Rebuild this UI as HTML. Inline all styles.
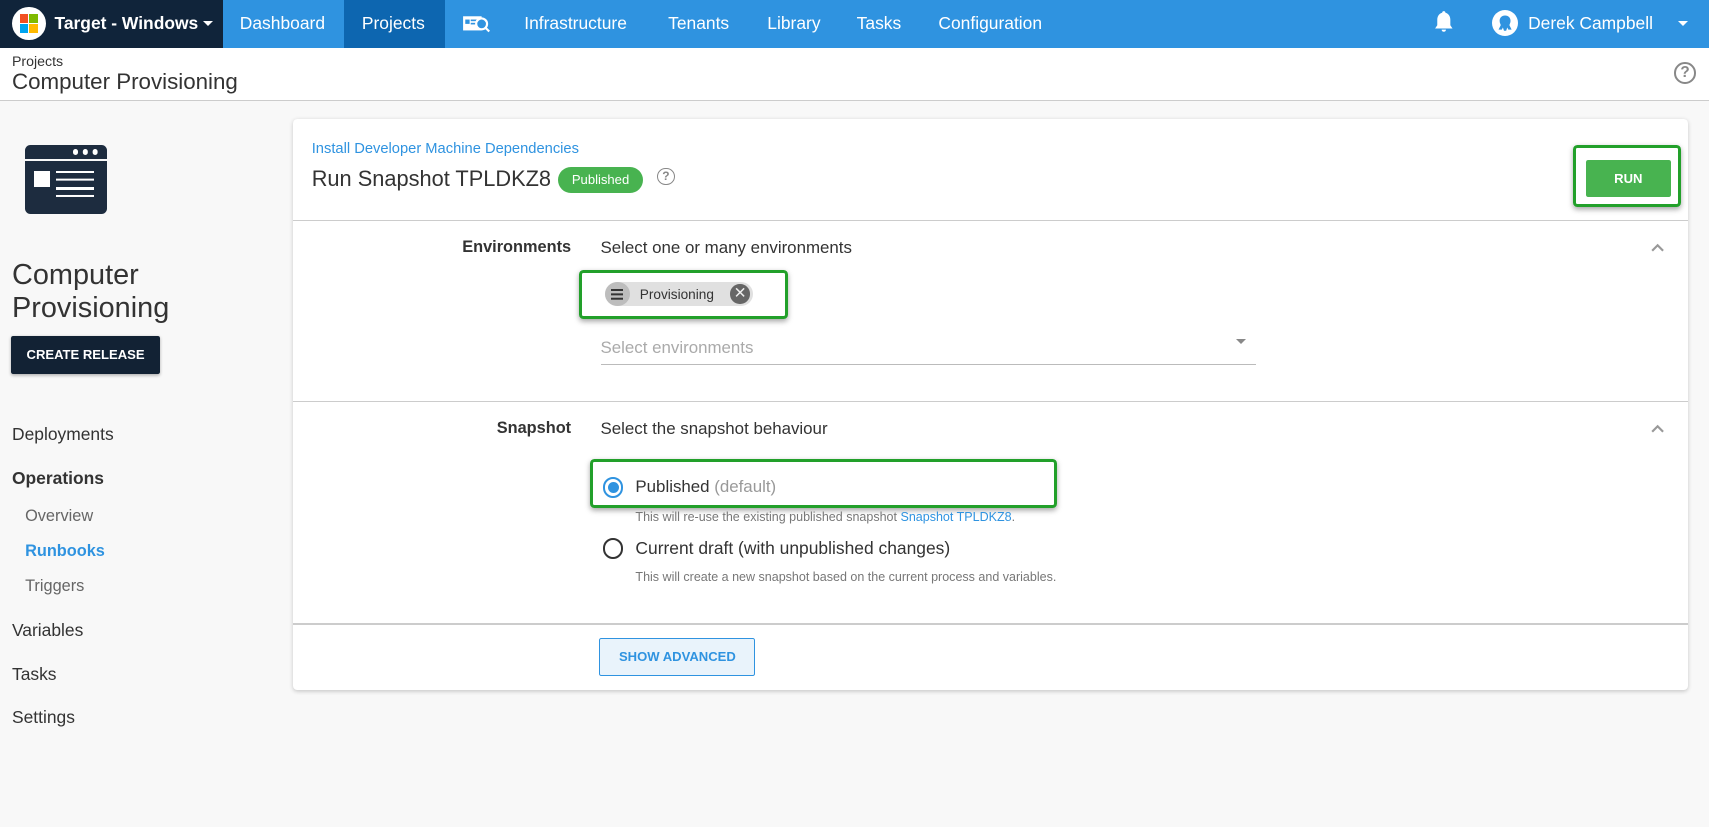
<!DOCTYPE html>
<html><head><meta charset="utf-8"><style>
*{box-sizing:border-box;margin:0;padding:0}
html,body{width:1709px;height:827px;overflow:hidden;background:#f8f8f8}
#w{zoom:1.08992;width:1568px;height:759px;position:relative;font-family:"Liberation Sans",sans-serif;color:#333}
.a{position:absolute;white-space:nowrap}
.nav{left:0;top:0;width:1568px;height:44px;background:#2f93e0}
.nt{color:#fff;font-size:16px;top:12px}
.grn{border:3px solid #22a02a;border-radius:4px;box-shadow:0 2px 5px rgba(0,0,0,.35)}
.hr{height:1px;background:#ccc;left:269px;width:1280px}
.lbl{font-size:15px;font-weight:bold;color:#333;text-align:right;width:300px;left:224px}
.sn{font-size:16px;left:11px;color:#333}
.ss{font-size:15px;left:23px;color:#666}
</style></head><body><div id="w">
<div class="a nav"></div>
<div class="a" style="left:0;top:0;width:205px;height:44px;background:#10243a"></div>
<div class="a" style="left:11px;top:6px;width:31px;height:31px;border-radius:50%;background:#fff"></div>
<div class="a" style="left:18px;top:13px;width:8px;height:8px;background:#f25022"></div>
<div class="a" style="left:27px;top:13px;width:8px;height:8px;background:#7fba00"></div>
<div class="a" style="left:18px;top:22px;width:8px;height:8px;background:#00a4ef"></div>
<div class="a" style="left:27px;top:22px;width:8px;height:8px;background:#ffb900"></div>
<div class="a nt" style="left:50px;font-weight:bold">Target - Windows</div>
<div class="a" style="left:186px;top:19px;border:5px solid transparent;border-top-color:#fff"></div>
<div class="a" style="left:316px;top:0;width:92px;height:44px;background:#0d66b0"></div>
<div class="a nt" style="left:220px">Dashboard</div>
<div class="a nt" style="left:332px">Projects</div>
<svg class="a" style="left:424px;top:12px" width="26" height="20" viewBox="0 0 26 20"><rect x="1" y="3" width="17" height="13" fill="#fff"/><rect x="3" y="6" width="4" height="4" fill="#2f93e0"/><rect x="8" y="6" width="6" height="1.5" fill="#2f93e0"/><rect x="8" y="9" width="6" height="1.5" fill="#2f93e0"/><circle cx="18" cy="10" r="5" fill="#2f93e0" stroke="#fff" stroke-width="2"/><line x1="21" y1="13" x2="25" y2="17" stroke="#fff" stroke-width="2"/></svg>
<div class="a nt" style="left:481px">Infrastructure</div>
<div class="a nt" style="left:613px">Tenants</div>
<div class="a nt" style="left:704px">Library</div>
<div class="a nt" style="left:786px">Tasks</div>
<div class="a nt" style="left:861px">Configuration</div>
<svg class="a" style="left:1316px;top:9px" width="18" height="22" viewBox="0 0 18 22"><path d="M9 1c-1 0-1.5.7-1.5 1.5C4.5 3.3 3 6 3 9v5l-2 3h16l-2-3V9c0-3-1.5-5.7-4.5-6.5C10.5 1.7 10 1 9 1z" fill="#fff"/><path d="M7 18a2 2 0 0 0 4 0z" fill="#fff"/></svg>
<div class="a" style="left:1369px;top:9px;width:24px;height:24px;border-radius:50%;background:#fff"></div>
<svg class="a" style="left:1369px;top:9px" width="24" height="24" viewBox="0 0 24 24"><path d="M12 5c-3 0-5 2-5 5 0 2 1 3 1 4l-2 4h3l1-2 1 3h2l1-3 1 2h3l-2-4c0-1 1-2 1-4 0-3-2-5-5-5z" fill="#2f93e0"/></svg>
<div class="a nt" style="left:1402px">Derek Campbell</div>
<div class="a" style="left:1540px;top:19px;border:5px solid transparent;border-top-color:#fff"></div>
<div class="a" style="left:0;top:44px;width:1568px;height:49px;background:#fff;border-bottom:1px solid #ccc"></div>
<div class="a" style="left:11px;top:50px;font-size:13px">Projects</div>
<div class="a" style="left:11px;top:63px;font-size:20.5px">Computer Provisioning</div>
<div class="a" style="left:1536px;top:57px;width:20px;height:20px;border:2px solid #888;border-radius:50%;font-size:14px;color:#888;text-align:center;line-height:16px;font-weight:bold">?</div>
<div class="a" style="left:23px;top:133px;width:75px;height:63px;background:#1d2c3f;border-radius:5px"></div>
<div class="a" style="left:23px;top:146px;width:75px;height:2px;background:#f8f8f8"></div>
<div class="a" style="left:67px;top:137px;width:5px;height:5px;border-radius:50%;background:#fff;box-shadow:9px 0 #fff,18px 0 #fff"></div>
<div class="a" style="left:31px;top:157px;width:15px;height:15px;background:#fff"></div>
<div class="a" style="left:51px;top:157px;width:35px;height:2px;background:#fff;box-shadow:0 7px #fff,0 22px #fff"></div>
<div class="a" style="left:51px;top:172px;width:35px;height:2px;background:#fff"></div>
<div class="a" style="left:11px;top:238px;font-size:26.5px;line-height:30px">Computer<br>Provisioning</div>
<div class="a" style="left:10px;top:308px;width:137px;height:35px;background:#122234;border-radius:2px;color:#fff;font-size:12px;font-weight:bold;text-align:center;line-height:35px;box-shadow:0 1px 3px rgba(0,0,0,.3)">CREATE RELEASE</div>
<div class="a sn" style="top:389px">Deployments</div>
<div class="a sn" style="top:429px;font-weight:bold">Operations</div>
<div class="a ss" style="top:465px">Overview</div>
<div class="a ss" style="top:497px;color:#2f93e0;font-weight:bold">Runbooks</div>
<div class="a ss" style="top:529px">Triggers</div>
<div class="a sn" style="top:569px">Variables</div>
<div class="a sn" style="top:609px">Tasks</div>
<div class="a sn" style="top:649px">Settings</div>
<div class="a" style="left:269px;top:109px;width:1280px;height:524px;background:#fff;border-radius:4px;box-shadow:0 1px 4px rgba(0,0,0,.2)"></div>
<div class="a" style="left:286px;top:129px;font-size:13.5px;color:#2f93e0">Install Developer Machine Dependencies</div>
<div class="a" style="left:286px;top:152px;font-size:20px;color:#333">Run Snapshot TPLDKZ8</div>
<div class="a" style="left:512px;top:153px;width:78px;height:24px;border-radius:12px;background:#48b350;color:#fff;font-size:12px;text-align:center;line-height:24px">Published</div>
<div class="a" style="left:603px;top:154px;width:16px;height:16px;border:1.5px solid #888;border-radius:50%;font-size:11px;color:#888;text-align:center;line-height:13px;font-weight:bold">?</div>
<div class="a grn" style="left:1443px;top:133px;width:99px;height:57px"></div>
<div class="a" style="left:1455px;top:147px;width:78px;height:34px;background:#48b350;border-radius:2px;color:#fff;font-size:12px;font-weight:bold;text-align:center;line-height:34px">RUN</div>
<div class="a hr" style="top:202px"></div>
<div class="a lbl" style="top:218px">Environments</div>
<div class="a" style="left:551px;top:218px;font-size:15.5px">Select one or many environments</div>
<svg class="a" style="left:1514px;top:222px" width="14" height="10"><path d="M2 8l5-5 5 5" stroke="#999" stroke-width="2" fill="none"/></svg>
<div class="a grn" style="left:531px;top:248px;width:192px;height:45px"></div>
<div class="a" style="left:555px;top:259px;width:136px;height:22px;background:#e0e0e0;border-radius:11px"></div>
<div class="a" style="left:555px;top:259px;width:23px;height:22px;background:#bdbdbd;border-radius:50%"></div>
<div class="a" style="left:561px;top:265px;width:11px;height:2px;background:#333;box-shadow:0 4px #333,0 8px #333"></div>
<div class="a" style="left:587px;top:263px;font-size:12.5px;color:#333">Provisioning</div>
<div class="a" style="left:670px;top:261px;width:18px;height:18px;background:#666;border-radius:50%;color:#eee;font-size:14px;text-align:center;line-height:18px">✕</div>
<div class="a" style="left:551px;top:310px;font-size:15.5px;color:#aaa">Select environments</div>
<div class="a" style="left:1134px;top:311px;border:5px solid transparent;border-top-color:#888"></div>
<div class="a" style="left:551px;top:334px;width:601px;height:1px;background:#bbb"></div>
<div class="a hr" style="top:368px"></div>
<div class="a lbl" style="top:384px">Snapshot</div>
<div class="a" style="left:551px;top:384px;font-size:15.5px">Select the snapshot behaviour</div>
<svg class="a" style="left:1514px;top:388px" width="14" height="10"><path d="M2 8l5-5 5 5" stroke="#999" stroke-width="2" fill="none"/></svg>
<div class="a grn" style="left:541px;top:421px;width:429px;height:45px"></div>
<div class="a" style="left:553px;top:438px;width:19px;height:19px;border:2px solid #2f93e0;border-radius:50%"></div>
<div class="a" style="left:557.5px;top:442.5px;width:10px;height:10px;background:#2f93e0;border-radius:50%"></div>
<div class="a" style="left:583px;top:438px;font-size:15.5px">Published <span style="color:#999">(default)</span></div>
<div class="a" style="left:583px;top:468px;font-size:11.5px;color:#777">This will re-use the existing published snapshot <span style="color:#2f93e0">Snapshot TPLDKZ8</span>.</div>
<div class="a" style="left:553px;top:494px;width:19px;height:19px;border:2px solid #333;border-radius:50%"></div>
<div class="a" style="left:583px;top:494px;font-size:16px">Current draft (with unpublished changes)</div>
<div class="a" style="left:583px;top:523px;font-size:11.5px;color:#777">This will create a new snapshot based on the current process and variables.</div>
<div class="a hr" style="top:572px"></div>
<div class="a" style="left:550px;top:585px;width:143px;height:35px;background:#e9f3fb;border:1px solid #2f93e0;border-radius:2px;color:#2f93e0;font-size:12px;font-weight:bold;text-align:center;line-height:33px">SHOW ADVANCED</div>
</div></body></html>
